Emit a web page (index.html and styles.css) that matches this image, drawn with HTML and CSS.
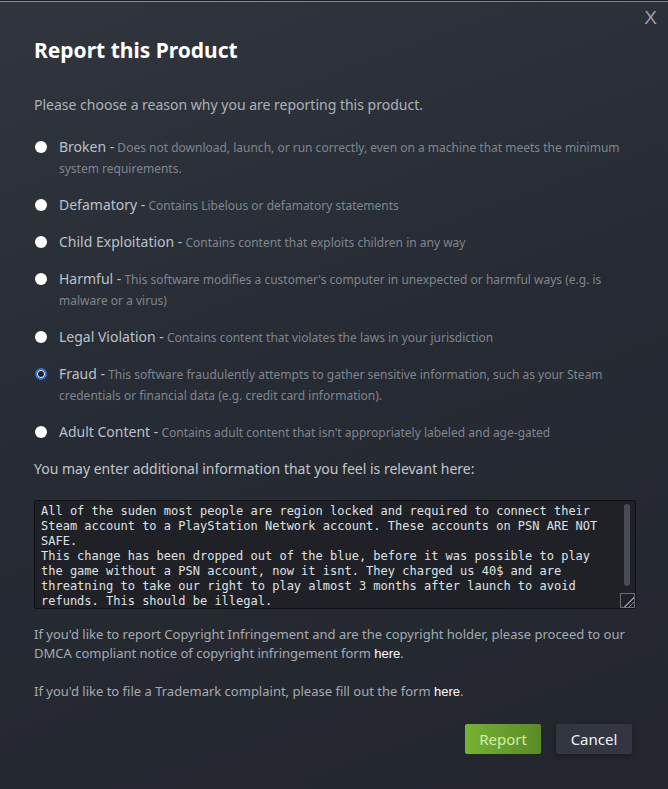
FILE: index.html
```html
<!DOCTYPE html>
<html lang="en">
<head>
    <meta charset="UTF-8">
    <meta name="viewport" content="width=device-width, initial-scale=1.0">
    <title>Report this Product</title>
    <link rel="stylesheet" href="styles.css">
</head>
<body>
    <div class="modal">
        <div class="close-btn">X</div>
        <h1 class="title">Report this Product</h1>
        <p class="intro">Please choose a reason why you are reporting this product.</p>

        <div class="reasons">
            <label class="reason">
                <input type="radio" name="reason">
                <span class="reason-text"><span class="reason-name">Broken -</span> Does not download, launch, or run correctly, even on a machine that meets the minimum system requirements.</span>
            </label>
            <label class="reason">
                <input type="radio" name="reason">
                <span class="reason-text"><span class="reason-name">Defamatory -</span> Contains Libelous or defamatory statements</span>
            </label>
            <label class="reason">
                <input type="radio" name="reason">
                <span class="reason-text"><span class="reason-name">Child Exploitation -</span> Contains content that exploits children in any way</span>
            </label>
            <label class="reason">
                <input type="radio" name="reason">
                <span class="reason-text"><span class="reason-name">Harmful -</span> This software modifies a customer's computer in unexpected or harmful ways (e.g. is malware or a virus)</span>
            </label>
            <label class="reason">
                <input type="radio" name="reason">
                <span class="reason-text"><span class="reason-name">Legal Violation -</span> Contains content that violates the laws in your jurisdiction</span>
            </label>
            <label class="reason">
                <input type="radio" name="reason" checked>
                <span class="reason-text"><span class="reason-name">Fraud -</span> This software fraudulently attempts to gather sensitive information, such as your Steam credentials or financial data (e.g. credit card information).</span>
            </label>
            <label class="reason">
                <input type="radio" name="reason">
                <span class="reason-text"><span class="reason-name">Adult Content -</span> Contains adult content that isn't appropriately labeled and age-gated</span>
            </label>
        </div>

        <p class="extra-label">You may enter additional information that you feel is relevant here:</p>
        <div class="extra-wrap">
            <textarea class="extra-info" spellcheck="false">All of the suden most people are region locked and required to connect their Steam account to a PlayStation Network account. These accounts on PSN ARE NOT SAFE.
This change has been dropped out of the blue, before it was possible to play the game without a PSN account, now it isnt. They charged us 40$ and are threatning to take our right to play almost 3 months after launch to avoid refunds. This should be illegal.</textarea>
            <div class="scroll-thumb"></div>
        </div>

        <p class="note">If you'd like to report Copyright Infringement and are the copyright holder, please proceed to our DMCA compliant notice of copyright infringement form <a href="#">here</a>.</p>
        <p class="note">If you'd like to file a Trademark complaint, please fill out the form <a href="#">here</a>.</p>

        <div class="actions">
            <button class="btn btn-report">Report</button>
            <button class="btn btn-cancel">Cancel</button>
        </div>
    </div>
</body>
</html>
```

FILE: styles.css
```css
body {
    margin: 0;
    background-color: #1b1d22;
    font-family: 'Noto Sans', 'Open Sans', sans-serif;
}
.modal {
    position: relative;
    box-sizing: border-box;
    height: 788px;
    margin-top: 1px;
    padding: 34px 32px 0 34px;
    border-top: 1px solid #4ba3dc;
    border-image: linear-gradient(90deg, #40a6d8, #5e7ff0) 1;
    background: linear-gradient(160deg, #31353e 0%, #272b33 45%, #23262d 100%);
}
.close-btn {
    position: absolute;
    top: 5px;
    right: 11px;
    font-family: 'Liberation Sans', sans-serif;
    font-size: 19px;
    color: #9a9ea6;
    cursor: pointer;
}
.title {
    margin: 0;
    font-size: 21px;
    font-weight: bold;
    color: #ffffff;
}
.intro {
    margin: 31px 0 22px;
    font-size: 14px;
    color: #acb2b8;
}
.reasons {
    display: flex;
    flex-direction: column;
    gap: 15px;
}
.reason {
    display: flex;
    align-items: flex-start;
    gap: 12px;
    font-size: 12px;
    line-height: 21px;
    color: #7f868e;
    cursor: pointer;
}
.reason input {
    appearance: none;
    flex: none;
    width: 12px;
    height: 12px;
    margin: 5px 0 0 1px;
    border-radius: 50%;
    background-color: #ffffff;
}
.reason input:checked {
    box-sizing: border-box;
    border: 2px solid #2f6ee8;
    background-color: #1b1f27;
    box-shadow: inset 0 0 0 1px #ffffff;
}
.reason-name {
    font-size: 14px;
    color: #b9c2ca;
}
.extra-label {
    margin: 16px 0 22px;
    font-size: 14px;
    color: #c3c6ca;
}
.extra-wrap {
    position: relative;
    width: 602px;
}
.extra-info {
    display: block;
    box-sizing: border-box;
    width: 602px;
    height: 109px;
    padding: 3px 23px 3px 6px;
    border: 1px solid #0f1013;
    border-radius: 2px;
    background-color: #1f2127;
    color: #dfe1e4;
    font-family: 'DejaVu Sans Mono', monospace;
    font-size: 12px;
    line-height: 15px;
    resize: both;
    outline: none;
    overflow: hidden;
}
.extra-info::-webkit-resizer {
    background: linear-gradient(135deg, transparent 60%, #8a8e95 60%, #8a8e95 66%, transparent 66%, transparent 78%, #8a8e95 78%, #8a8e95 84%, transparent 84%), #1f2127;
    border: 1px solid #6b6f76;
}
.scroll-thumb {
    position: absolute;
    top: 4px;
    right: 6px;
    width: 6px;
    height: 82px;
    border-radius: 3px;
    background-color: #474b54;
}
.note {
    margin: 16px 0 0;
    font-size: 13px;
    line-height: 19px;
    color: #a6abb1;
}
.note + .note {
    margin-top: 19px;
}
.note a {
    font-family: 'Liberation Sans', sans-serif;
    color: #ffffff;
    text-decoration: none;
}
.actions {
    display: flex;
    justify-content: flex-end;
    gap: 15px;
    margin-top: 23px;
    padding-right: 4px;
}
.btn {
    height: 30px;
    padding: 0 10px;
    border: none;
    border-radius: 2px;
    font-family: 'Noto Sans', sans-serif;
    font-size: 15px;
    cursor: pointer;
}
.btn-report {
    width: 76px;
    background: linear-gradient(90deg, #76b233, #5a8b25);
    color: #d2efa9;
}
.btn-cancel {
    width: 76px;
    background-color: #333640;
    color: #eef2f6;
    box-shadow: 0 2px 6px rgba(0, 0, 0, 0.3);
}
```
